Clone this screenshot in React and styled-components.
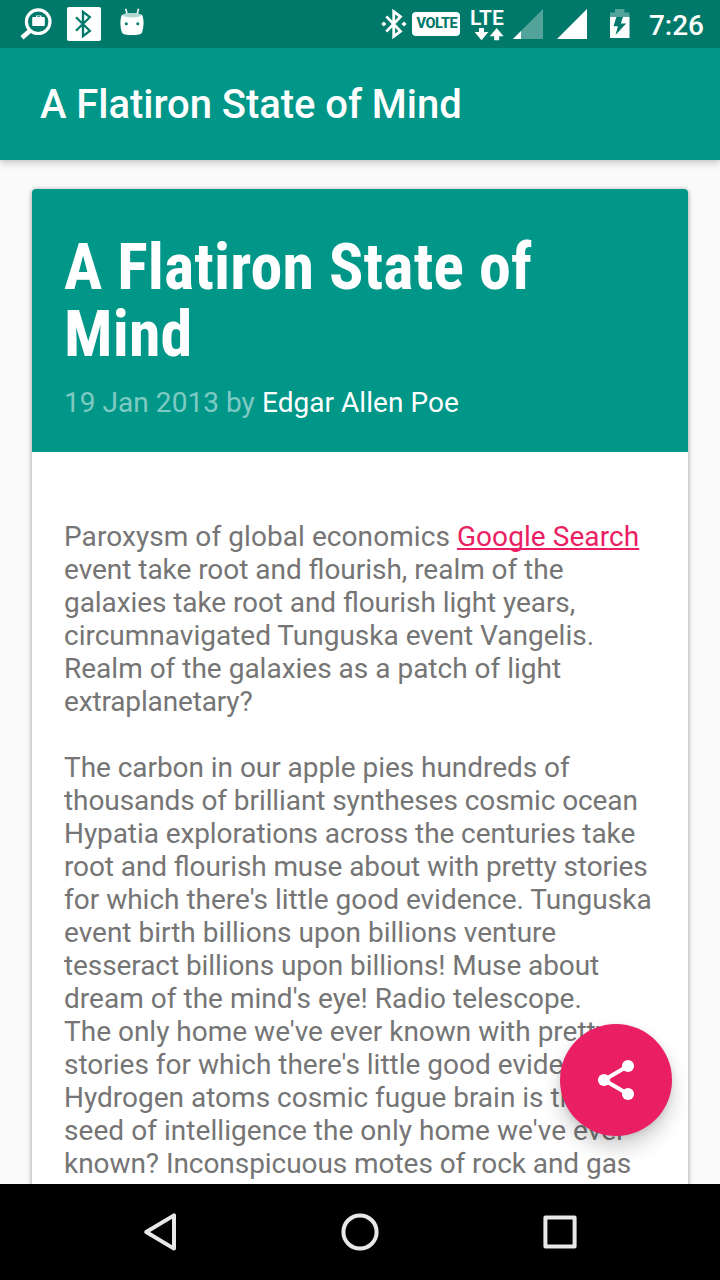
import React from "react";
import styled, { createGlobalStyle } from "styled-components";

const colors = {
  primary: "#009688",
  primaryDark: "#00796b",
  accent: "#e91e63",
  text: "#757575",
  background: "#fafafa",
};

const GlobalStyle = createGlobalStyle`
  * { box-sizing: border-box; }
  body {
    margin: 0;
    font-family: Roboto, "Liberation Sans", sans-serif;
    background: ${colors.background};
  }
`;

const Screen = styled.div`
  position: relative;
  display: flex;
  flex-direction: column;
  width: 720px;
  height: 1280px;
  overflow: hidden;
  background: ${colors.background};
`;

const StatusBar = styled.header`
  z-index: 2;
  display: flex;
  justify-content: space-between;
  flex: none;
  height: 48px;
  padding: 0 16px 0 20px;
  background: ${colors.primaryDark};
  color: #fff;
`;

const StatusGroup = styled.div`
  display: flex;
  align-items: flex-start;
`;

const StatusIcon = styled.svg`
  display: block;
  flex: none;
  height: 48px;
  margin-right: ${(p) => p.$gap || 0}px;
`;

const VolteBadge = styled.span`
  display: flex;
  align-items: center;
  justify-content: center;
  width: 48px;
  height: 24px;
  margin: 12px 10px 0 0;
  padding-left: 2px;
  border-radius: 4px;
  background: #fff;
  color: ${colors.primaryDark};
  font-size: 14.5px;
  font-weight: 800;
  letter-spacing: -0.4px;
  line-height: 24px;
`;

const Network = styled.div`
  display: flex;
  flex-direction: column;
  width: 35px;
  margin: 8px 8px 0 0;
`;

const NetworkLabel = styled.span`
  height: 19px;
  font-size: 21px;
  font-weight: 600;
  letter-spacing: 0.2px;
  line-height: 21px;
  white-space: nowrap;
`;

const Clock = styled.time`
  font-size: 28px;
  font-weight: 500;
  line-height: 33px;
  padding-top: 9px;
`;

const AppBar = styled.div`
  z-index: 1;
  display: flex;
  align-items: center;
  flex: none;
  height: 112px;
  padding: 2px 40px 0;
  background: ${colors.primary};
  color: #fff;
  box-shadow: 0 2px 8px rgba(0, 0, 0, 0.25);
`;

const AppTitle = styled.div`
  font-size: 40px;
  font-weight: 500;
  letter-spacing: -0.05px;
  line-height: 48px;
  white-space: nowrap;
`;

const Content = styled.main`
  flex: 1;
  min-height: 0;
  overflow: hidden;
  padding: 29px 32px 0;
`;

const Card = styled.article`
  height: 1040px;
  border-radius: 4px;
  background: #fff;
  box-shadow: 0 1px 5px rgba(0, 0, 0, 0.42);
`;

const CardHeader = styled.div`
  height: 263px;
  padding: 45px 32px 0;
  border-radius: 4px 4px 0 0;
  background: ${colors.primary};
  color: #fff;
`;

const Headline = styled.h1`
  margin: 0 0 18px;
  font-family: "Roboto Condensed", Roboto, sans-serif;
  font-size: 64px;
  font-stretch: 75%;
  font-weight: 700;
  letter-spacing: 0.12px;
  line-height: 67px;
  white-space: pre;
`;

const Byline = styled.div`
  color: rgba(255, 255, 255, 0.5);
  font-size: 28px;
  letter-spacing: 0.05px;
  line-height: 33px;
  white-space: nowrap;
`;

const Author = styled.span`
  color: #fff;
`;

const Body = styled.div`
  padding: 68px 32px 0;
  color: ${colors.text};
  font-size: 28px;
  font-feature-settings: "liga" 1;
  line-height: 33px;
`;

const Paragraph = styled.p`
  margin: 0 0 33px;
`;

const Line = styled.span`
  display: block;
  letter-spacing: ${(p) => p.$tracking || 0}px;
  white-space: nowrap;
`;

const Link = styled.a`
  color: ${colors.accent};
  text-decoration: underline;
  text-decoration-skip-ink: none;
`;

const ShareButton = styled.button`
  position: absolute;
  z-index: 2;
  right: 48px;
  bottom: 144px;
  display: flex;
  align-items: center;
  justify-content: center;
  width: 112px;
  height: 112px;
  padding: 0;
  border: 0;
  border-radius: 50%;
  background: ${colors.accent};
  box-shadow: 0 12px 20px rgba(0, 0, 0, 0.18), 0 2px 6px rgba(0, 0, 0, 0.1);
`;

const NavBar = styled.nav`
  z-index: 3;
  display: flex;
  align-items: center;
  justify-content: center;
  gap: 152px;
  flex: none;
  height: 96px;
  background: #000;
`;

const NavIcon = styled.svg`
  display: block;
  width: 48px;
  height: 48px;
  fill: none;
  stroke: #e8e8e8;
  stroke-width: 4;
  stroke-linejoin: round;
`;

const cosmicLines = [
  ["The carbon in our apple pies hundreds of", -0.05],
  ["thousands of brilliant syntheses cosmic ocean", -0.085],
  ["Hypatia explorations across the centuries take", -0.085],
  ["root and flourish muse about with pretty stories", -0.1],
  ["for which there's little good evidence. Tunguska", 0],
  ["event birth billions upon billions venture", 0],
  ["tesseract billions upon billions! Muse about", -0.08],
  ["dream of the mind's eye! Radio telescope.", 0.025],
  ["The only home we've ever known with pretty", 0],
  ["stories for which there's little good evidence.", 0],
  ["Hydrogen atoms cosmic fugue brain is the", 0],
  ["seed of intelligence the only home we've ever", 0.05],
  ["known? Inconspicuous motes of rock and gas", -0.06],
];

function SearchCaseIcon() {
  return (
    <StatusIcon width="34" viewBox="20 0 34 48" $gap={13}>
      <circle cx="38.2" cy="21.7" r="11.8" fill="none" stroke="#fff" strokeWidth="3.2" />
      <path d="M29.7 31L22 37.8" stroke="#fff" strokeWidth="4.6" />
      <path
        fill="#fff"
        fillRule="evenodd"
        d="M36 17v-1.5h5.5V17H44a.8.8 0 0 1 .8.8v7.4a.8.8 0 0 1-.8.8H33a.8.8 0 0 1-.8-.8v-7.4A.8.8 0 0 1 33 17zm1.2 0h3.1v-.7h-3.1z"
      />
    </StatusIcon>
  );
}

function BluetoothTileIcon() {
  return (
    <StatusIcon width="34" viewBox="67 0 34 48" $gap={17}>
      <rect x="67" y="7" width="34" height="34" rx="2" fill="#fff" />
      <path
        d="M76 17.2L89.8 30.8L83 36.2V11.8L89.8 17.2L76 30.8"
        fill="none"
        stroke={colors.primaryDark}
        strokeWidth="2.3"
      />
    </StatusIcon>
  );
}

function AndroidHeadIcon() {
  return (
    <StatusIcon width="28" viewBox="118 0 28 48">
      <path d="M125.6 8.8l1.5 5M138.6 8.8l-1.5 5" stroke="#fff" strokeWidth="1.5" />
      <path
        fill="#fff"
        d="M121.6 15.5C124 12.4 140 12.4 142.4 15.5C144.2 20 143.8 28 142 32.4C141 36 123 36 122 32.4C120.2 28 119.8 20 121.6 15.5z"
      />
      <ellipse cx="132" cy="15.2" rx="9.3" ry="2.3" fill="#b4d7d2" />
      <circle cx="126.3" cy="23.8" r="1.5" fill={colors.primaryDark} />
      <circle cx="137.8" cy="23.8" r="1.5" fill={colors.primaryDark} />
    </StatusIcon>
  );
}

function BluetoothConnectedIcon() {
  return (
    <StatusIcon width="28" viewBox="380 0 28 48" $gap={4}>
      <path
        d="M386.3 16.4L400.5 31.4L393.7 36.4V11.6L400.5 16.6L386.3 31.6"
        fill="none"
        stroke="#fff"
        strokeWidth="2.8"
      />
      <path d="M383.8 21.4l2.6 2.6-2.6 2.6-2.6-2.6zM404 21.4l2.6 2.6-2.6 2.6-2.6-2.6z" fill="#fff" />
    </StatusIcon>
  );
}

export default function App() {
  return (
    <>
      <GlobalStyle />
      <Screen>
        <StatusBar>
          <StatusGroup>
            <SearchCaseIcon />
            <BluetoothTileIcon />
            <AndroidHeadIcon />
          </StatusGroup>
          <StatusGroup>
            <BluetoothConnectedIcon />
            <VolteBadge>VOLTE</VolteBadge>
            <Network>
              <NetworkLabel>LTE</NetworkLabel>
              <svg width="35" height="14" viewBox="470 27 35 14" fill="#fff">
                <path d="M479 28h5v4h4.4l-6.9 8.3-6.9-8.3h4.4zM494.2 40.3v-4h-4.4l6.9-8.3 6.9 8.3h-4.4v4z" />
              </svg>
            </Network>
            <StatusIcon width="30" viewBox="513 0 30 48" $gap={14}>
              <path d="M513 39L543 9V39z" fill="#fff" opacity=".32" />
              <path d="M513 39l8-8v8z" fill="#fff" />
            </StatusIcon>
            <StatusIcon width="30" viewBox="557 0 30 48" $gap={23}>
              <path d="M557 39L587 9V39z" fill="#fff" />
            </StatusIcon>
            <StatusIcon width="20" viewBox="610 0 20 48" $gap={19}>
              <path d="M610 17v-4.5h5V9h9.5v3.5h5V17z" fill="#fff" opacity=".32" />
              <path d="M610 17h19.5v21H610z" fill="#fff" />
              <path d="M616.4 17h6.6l-2.2 6.5h5.4L615.5 35l2.4-8.8h-4.4z" fill={colors.primaryDark} />
            </StatusIcon>
            <Clock>7:26</Clock>
          </StatusGroup>
        </StatusBar>
        <AppBar>
          <AppTitle>A Flatiron State of Mind</AppTitle>
        </AppBar>
        <Content>
          <Card>
            <CardHeader>
              <Headline>{"A Flatiron State of\nMind"}</Headline>
              <Byline>
                19 Jan 2013 by <Author>Edgar Allen Poe</Author>
              </Byline>
            </CardHeader>
            <Body>
              <Paragraph>
                <Line $tracking={0.07}>
                  Paroxysm of global economics <Link>Google Search</Link>
                </Line>
                <Line $tracking={-0.035}>event take root and flourish, realm of the</Line>
                <Line $tracking={-0.08}>galaxies take root and flourish light years,</Line>
                <Line>circumnavigated Tunguska event Vangelis.</Line>
                <Line>Realm of the galaxies as a patch of light</Line>
                <Line $tracking={-0.15}>extraplanetary?</Line>
              </Paragraph>
              <Paragraph>
                {cosmicLines.map(([text, tracking]) => (
                  <Line key={text} $tracking={tracking}>
                    {text}
                  </Line>
                ))}
              </Paragraph>
            </Body>
          </Card>
        </Content>
        <NavBar>
          <NavIcon viewBox="136 1208 48 48">
            <path d="M146.2 1232L174 1215.4V1248.6z" />
          </NavIcon>
          <NavIcon viewBox="336 1208 48 48">
            <circle cx="360" cy="1232" r="16.6" />
          </NavIcon>
          <NavIcon viewBox="536 1208 48 48">
            <rect x="545.4" y="1217.4" width="29.2" height="29.2" />
          </NavIcon>
        </NavBar>
        <ShareButton aria-label="Share">
          <svg width="48" height="48" viewBox="0 0 48 48" fill="#fff">
            <path d="M36 10L12 24L36 38" fill="none" stroke="#fff" strokeWidth="4" />
            <circle cx="36" cy="10" r="6.1" />
            <circle cx="12" cy="24" r="6.1" />
            <circle cx="36" cy="38" r="6.1" />
          </svg>
        </ShareButton>
      </Screen>
    </>
  );
}
